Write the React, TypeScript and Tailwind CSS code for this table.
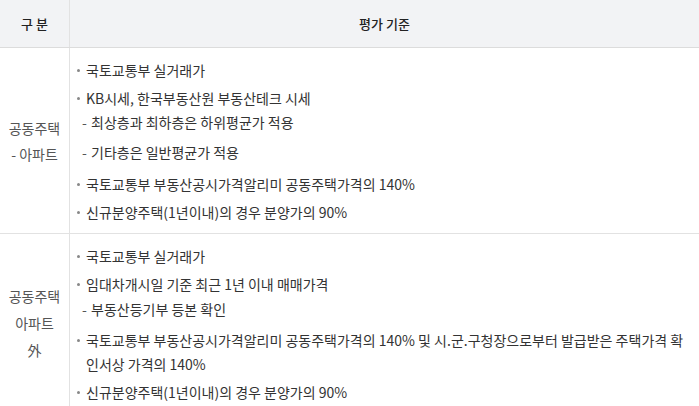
import React from 'react';

type Line = { text: string; sub?: boolean; gap: string };

const apt: Line[] = [
  { text: '국토교통부 실거래가', gap: 'mt-0' },
  { text: 'KB시세, 한국부동산원 부동산테크 시세', gap: 'mt-[4px]' },
  { text: '최상층과 최하층은 하위평균가 적용', sub: true, gap: 'mt-0' },
  { text: '기타층은 일반평균가 적용', sub: true, gap: 'mt-[6px]' },
  { text: '국토교통부 부동산공시가격알리미 공동주택가격의 140%', gap: 'mt-[8px]' },
  { text: '신규분양주택(1년이내)의 경우 분양가의 90%', gap: 'mt-[4px]' },
];

const etc: Line[] = [
  { text: '국토교통부 실거래가', gap: 'mt-0' },
  { text: '임대차개시일 기준 최근 1년 이내 매매가격', gap: 'mt-[4px]' },
  { text: '부동산등기부 등본 확인', sub: true, gap: 'mt-[1px]' },
  {
    text: '국토교통부 부동산공시가격알리미 공동주택가격의 140% 및 시.군.구청장으로부터 발급받은 주택가격 확인서상 가격의 140%',
    gap: 'mt-[7px]',
  },
  { text: '신규분양주택(1년이내)의 경우 분양가의 90%', gap: 'mt-[4px]' },
];

function Criteria({ lines }: { lines: Line[] }) {
  return (
    <ul className="pt-[10px] pb-[9px] pl-[7px] pr-[14px]">
      {lines.map((l, i) =>
        l.sub ? (
          <li key={i} className={`${l.gap} flex leading-6 pl-[5px]`}>
            <span className="w-[9px] shrink-0 text-[#555]">-</span>
            <span>{l.text}</span>
          </li>
        ) : (
          <li key={i} className={`${l.gap} flex leading-6`}>
            <span className="w-[9px] h-6 shrink-0 flex items-center pt-[1px]">
              <span className="block w-[3px] h-[3px] bg-[#888] rounded-full" />
            </span>
            <span>{l.text}</span>
          </li>
        )
      )}
    </ul>
  );
}

export default function App() {
  return (
    <div
      className="w-[699px] h-[406px] overflow-hidden bg-white text-[14px] text-[#333]"
      style={{ fontFamily: '"Noto Sans CJK KR", "Noto Sans", sans-serif' }}
    >
      <div className="flex h-[48px] bg-[#f2f3f5] border-b border-[#dcdcdc] text-[13px] font-medium text-[#222]">
        <div className="w-[70px] shrink-0 flex items-center justify-center border-r border-[#e2e2e2]">
          구 분
        </div>
        <div className="flex-1 flex items-center justify-center">평가 기준</div>
      </div>

      <div className="flex border-b border-[#e2e2e2]">
        <div className="w-[70px] shrink-0 flex flex-col items-center justify-center border-r border-[#e2e2e2] text-[#555] leading-[26px]">
          <span>공동주택</span>
          <span>- 아파트</span>
        </div>
        <div className="flex-1">
          <Criteria lines={apt} />
        </div>
      </div>

      <div className="flex">
        <div className="w-[70px] shrink-0 flex flex-col items-center justify-center border-r border-[#e2e2e2] text-[#555] leading-[27px]">
          <span>공동주택</span>
          <span>아파트</span>
          <span>外</span>
        </div>
        <div className="flex-1">
          <Criteria lines={etc} />
        </div>
      </div>
    </div>
  );
}
